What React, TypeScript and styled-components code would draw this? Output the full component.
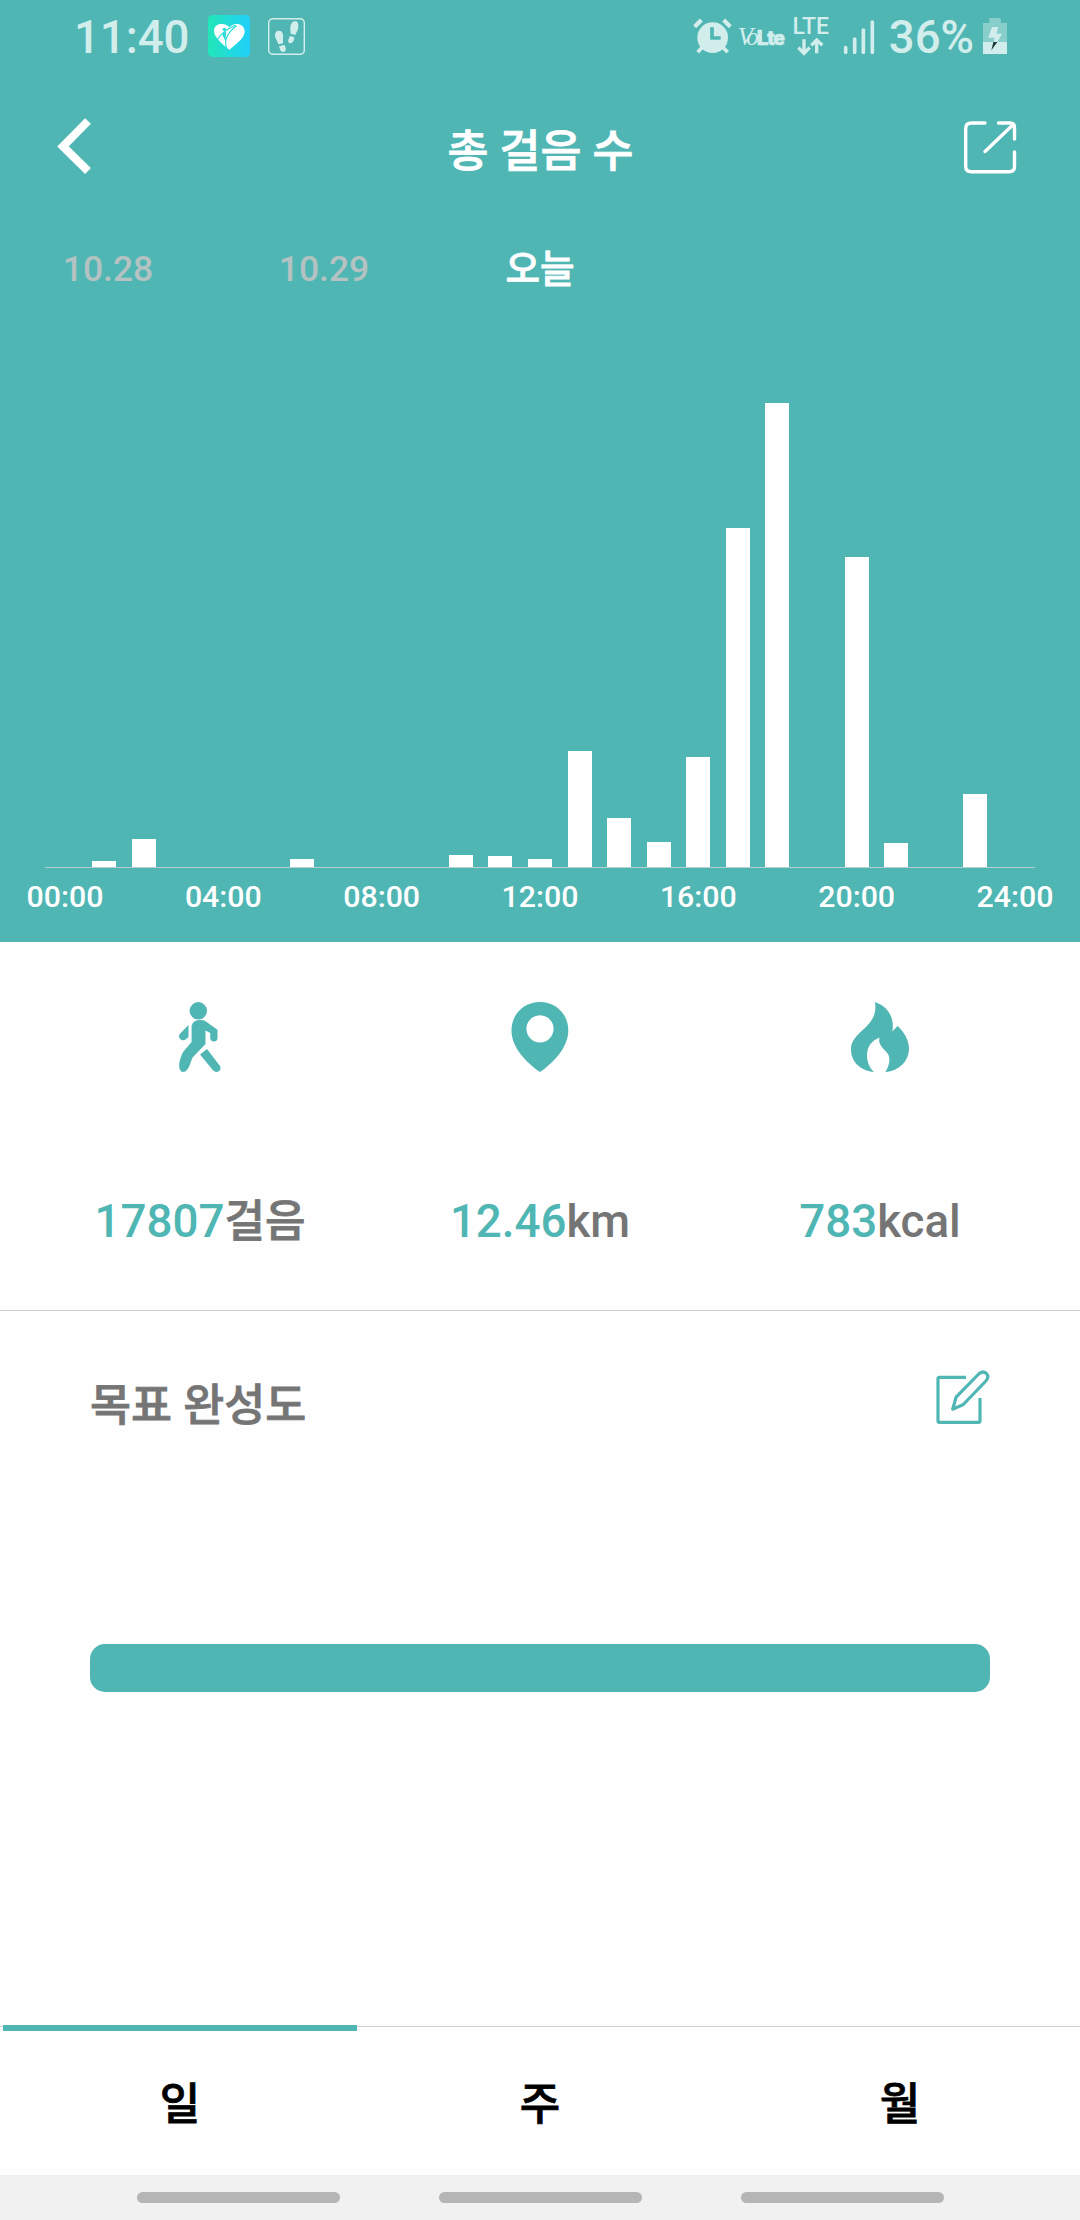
import React from "react";
import styled, { createGlobalStyle, css } from "styled-components";

const TEAL = "#50b6b4";
const STATUS = "#d2eeec";

const GlobalStyle = createGlobalStyle`
  * { box-sizing: border-box; }
  body {
    margin: 0;
    background: #fff;
    font-family: Roboto, "Noto Sans CJK KR", sans-serif;
    font-weight: 500;
  }
`;

/* Semi-bold Hangul: the medium weight with a slightly thickened outline. */
const hangulSemiBold = css`
  font-weight: 500;
  -webkit-text-stroke: 0.8px currentColor;
`;

const Screen = styled.div`
  width: 1080px;
  height: 2220px;
  display: flex;
  flex-direction: column;
  background: #fefefe;
  overflow: hidden;
`;

const Hero = styled.section`
  height: 942px;
  flex: none;
  display: flex;
  flex-direction: column;
  background: ${TEAL};
  color: #fff;
`;

const StatusBar = styled.div`
  height: 72px;
  flex: none;
  display: flex;
  align-items: flex-start;
  justify-content: space-between;
  padding: 15px 73px 0 74px;
  color: ${STATUS};
`;

const StatusGroup = styled.div`
  display: flex;
  align-items: flex-start;
`;

const StatusText = styled.span<{ $ml?: number }>`
  margin-top: 1px;
  font-size: 45.5px;
  line-height: 44px;
  margin-left: ${(p) => p.$ml ?? 0}px;
`;

const StatusIcon = styled.svg<{ $ml: number; $mt: number }>`
  display: block;
  flex: none;
  margin-left: ${(p) => p.$ml}px;
  margin-top: ${(p) => p.$mt}px;
`;

const Volte = styled.div`
  display: flex;
  align-items: baseline;
  width: 48px;
  margin: 7px 0 0 6px;
  line-height: 30px;
`;

const VoMark = styled.span`
  width: 19px;
  font: italic 400 25px/30px "Liberation Serif", serif;
  letter-spacing: -4px;
`;

const LteMark = styled.span`
  font: 900 21px/30px Roboto, sans-serif;
  letter-spacing: -1px;
  -webkit-text-stroke: 0.6px currentColor;
`;

const Network = styled.div`
  width: 36px;
  margin-left: 7px;
  display: flex;
  flex-direction: column;
  align-items: center;
`;

const NetworkLabel = styled.span`
  font-size: 23px;
  line-height: 23px;
`;

const AppBar = styled.header`
  height: 144px;
  flex: none;
  display: grid;
  grid-template-columns: 60px 1fr 60px;
  align-items: start;
  padding: 0 62px 0 55px;
`;

const Title = styled.h1`
  margin: 47px 0 0 8px;
  font-size: 44.5px;
  line-height: 66px;
  ${hangulSemiBold}
  text-align: center;
`;

const BarIcon = styled.svg<{ $mt: number; $end?: boolean }>`
  display: block;
  margin-top: ${(p) => p.$mt}px;
  justify-self: ${(p) => (p.$end ? "end" : "start")};
`;

const Dates = styled.nav`
  height: 104px;
  flex: none;
  display: grid;
  grid-template-columns: repeat(5, 216px);
  text-align: center;
`;

const DateTab = styled.span<{ $active?: boolean }>`
  padding-top: 1px;
  font-size: 35.5px;
  line-height: 104px;
  color: #b4c3c1;
  ${(p) =>
    p.$active &&
    css`
      font-size: 37.5px;
      color: #fff;
      ${hangulSemiBold}
    `}
`;

const Bars = styled.div`
  height: 548px;
  margin: 0 45px;
  flex: none;
  display: grid;
  grid-template-columns: repeat(25, 39.6px);
  align-items: end;
  justify-items: center;
  border-bottom: 1px solid #b4cfcd;
`;

const Bar = styled.div`
  width: 24px;
  background: #fff;
`;

const AxisLabels = styled.div`
  display: flex;
  justify-content: space-between;
  padding: 10px 15px 0 15px;
`;

const AxisLabel = styled.span`
  width: 100px;
  text-align: center;
  font-size: 30.3px;
  line-height: 38px;
`;

const Stats = styled.section`
  height: 369px;
  flex: none;
  display: grid;
  grid-template-columns: repeat(3, 340px);
  justify-content: center;
  border-bottom: 1px solid #d0d0d0;
`;

const Stat = styled.div`
  display: flex;
  flex-direction: column;
  align-items: center;
  padding-top: 60px;
`;

const StatValue = styled.div`
  display: flex;
  align-items: baseline;
  margin-top: 117px;
  font-size: 45.7px;
  line-height: 66px;
  color: #757575;
  white-space: nowrap;
`;

const StatNumber = styled.span`
  color: ${TEAL};
`;

const StatUnit = styled.span<{ $hangul?: boolean }>`
  ${(p) =>
    p.$hangul &&
    css`
      font-size: 44px;
      ${hangulSemiBold}
    `}
`;

const Goal = styled.section`
  flex: 1;
  padding: 59px 90px 0;
`;

const GoalHeader = styled.div`
  display: flex;
  justify-content: space-between;
  align-items: flex-start;
  height: 274px;
`;

const GoalTitle = styled.h2`
  margin: 0;
  padding-top: 3px;
  font-size: 44.6px;
  line-height: 66px;
  ${hangulSemiBold}
  color: #757575;
`;

const ProgressTrack = styled.div`
  height: 48px;
  border-radius: 15px;
  overflow: hidden;
  background: #e6e6e6;
`;

const ProgressFill = styled.div`
  height: 100%;
  background: ${TEAL};
`;

const Tabs = styled.nav`
  height: 150px;
  flex: none;
  display: grid;
  grid-template-columns: repeat(3, 1fr);
`;

const Tab = styled.button`
  display: flex;
  flex-direction: column;
  align-items: stretch;
  padding: 0 3px;
  border: 0;
  background: linear-gradient(#d0d0d0, #d0d0d0) 0 1px / 100% 1px no-repeat;
  color: #000;
  font: inherit;
  font-size: 44px;
  ${hangulSemiBold}
  line-height: 66px;
`;

const TabMarker = styled.span<{ $active?: boolean }>`
  height: 6px;
  margin-bottom: 41px;
  background: ${(p) => (p.$active ? TEAL : "transparent")};
`;

const SystemNav = styled.div`
  height: 45px;
  flex: none;
  display: flex;
  justify-content: center;
  gap: 99px;
  padding-top: 17px;
  background: #f1f1f1;
`;

const NavPill = styled.span`
  width: 203px;
  height: 11px;
  border-radius: 6px;
  background: #b5b5b5;
`;

const hourly = [
  0, 6, 28, 0, 0, 0, 8, 0, 0, 0, 12.5, 11, 8, 116, 49, 25, 110, 339, 464, 0,
  310, 24, 0, 73, 0,
];
const hours = ["00:00", "04:00", "08:00", "12:00", "16:00", "20:00", "24:00"];
const progress = 100;

const HeartAppIcon = () => (
  <StatusIcon $ml={19} $mt={0} width="42" height="42" viewBox="0 0 126 126">
    <defs>
      <linearGradient id="appGradient" x1="0" x2="1" y1="0" y2="0">
        <stop offset="0" stopColor="#22e6b8" />
        <stop offset="1" stopColor="#1fd0fb" />
      </linearGradient>
    </defs>
    <rect width="126" height="126" rx="14" fill="url(#appGradient)" />
    <path d="M64 104C48 92 18 68 18 48C18 32 30 27 42 27C52 27 60 31 64 37C69 31 76 27 86 27C98 27 110 34 110 50C110 70 80 90 64 104Z" fill="#fff" />
    <path d="M28 74C40 56 56 42 82 31M56 98C46 78 60 50 86 32" fill="none" stroke="#25dcd9" strokeWidth="3.5" />
    <circle cx="49" cy="43" r="5" fill="#25dcd9" />
    <path d="M44 54L54 50L53 80Q48 68 44 62Z" fill="#25dcd9" />
  </StatusIcon>
);

const FootstepsIcon = () => (
  <StatusIcon $ml={18} $mt={3} width="37" height="37" viewBox="0 0 111 111">
    <rect x="2" y="2" width="107" height="107" rx="13" fill="none" stroke={STATUS} strokeWidth="4.5" />
    <g fill={STATUS}>
      <path d="M33 38C43 38 47 49 45 58C44 65 46 71 45 76L31 79C29 70 21 62 21 52C21 44 25 38 33 38Z" />
      <path d="M33 85L49 81C53 88 55 94 52 99C48 104 40 102 37 97Z" />
      <path d="M80 10C89 8 92 17 91 27C90 38 84 44 82 51L68 47C68 41 66 36 67 28C68 18 72 11 80 10Z" />
      <path d="M66 54L79 58C79 65 77 72 70 75C63 77 59 71 61 65Z" />
    </g>
  </StatusIcon>
);

const AlarmIcon = () => (
  <StatusIcon $ml={0} $mt={3} width="39" height="36" viewBox="0 0 117 108">
    <circle cx="59" cy="59" r="46" fill={STATUS} />
    <g stroke={STATUS} strokeWidth="13">
      <path d="M5 26L25 6M92 6L112 26" />
      <path d="M28 88L14 103M90 88L104 103" strokeWidth="11" />
    </g>
    <path d="M57 28V60H83" fill="none" stroke={TEAL} strokeWidth="11" />
  </StatusIcon>
);

const DataArrows = () => (
  <svg width="27" height="18" viewBox="0 0 81 54" fill="none" stroke={STATUS} strokeWidth="10">
    <path d="M21 4V45M4 29L21 46L38 29M59 46V6M43 22L59 6L76 22" />
  </svg>
);

const SignalIcon = () => (
  <StatusIcon $ml={14} $mt={5} width="32" height="34" viewBox="0 0 96 102">
    <g stroke={STATUS} strokeWidth="11" strokeLinecap="round">
      <path d="M8 83V97M35 57V97M61 30V97M88 6V97" />
    </g>
  </StatusIcon>
);

const BatteryIcon = () => (
  <StatusIcon $ml={9} $mt={3} width="24" height="36" viewBox="0 0 72 108">
    <path d="M19 0H53V15H72V72H0V15H19Z" fill="#88cfcc" />
    <rect y="72" width="72" height="36" fill={STATUS} />
    <path d="M27 27H46L40 47H57L43 72H32L35 59H16Z" fill={STATUS} />
    <path d="M31 72H43L25 97Z" fill="#20373a" />
  </StatusIcon>
);

const BackIcon = () => (
  <BarIcon $mt={46} width="40" height="56" viewBox="0 0 40 56">
    <path d="M33 3L8 28.5L33 53" fill="none" stroke="#fff" strokeWidth="8.2" />
  </BarIcon>
);

const ShareIcon = () => (
  <BarIcon $mt={48} $end width="56" height="56" viewBox="-1 -1 56 56">
    <path
      d="M22 3H8.5Q2.7 3 2.7 8.5V46.5Q2.7 51.7 8.5 51.7H46Q51.5 51.7 51.5 46.5V32M35.5 3H47Q51.5 3 51.5 7.5V19M50.5 4.3L22 31.5"
      transform="translate(0 -1)"
      fill="none"
      stroke="#fff"
      strokeWidth="3.4"
      strokeLinecap="round"
      strokeLinejoin="round"
    />
  </BarIcon>
);

const WalkIcon = () => (
  <svg width="42" height="70" viewBox="0 0 42 70" fill={TEAL}>
    <circle cx="19.3" cy="8.8" r="8.7" />
    <path d="M15.5 19.2Q20 17.3 25.5 18.5L38.5 27.8V36.5Q38 39.5 35.2 39.5Q31.5 39.5 31.2 36V31L26.5 28.4V42L14.5 54.5C11.5 57 11 69.8 4 70Q0 69.5 .2 63C.5 58.5 2.5 52.5 4.5 49.5L12.6 40V24Q13 21 15.5 19.2Z" />
    <path d="M9.5 23V35L6.5 37.5C3.5 39.3 0 37.3 0 34.5C0 33 .5 32.3 1.5 31.3Z" />
    <path d="M28 47L41 64Q42.3 67 40.2 69Q37 71.3 34 68.2L21 52.5Z" />
  </svg>
);

const PinIcon = () => (
  <svg width="58" height="70" viewBox="0 0 58 70">
    <path
      fillRule="evenodd"
      fill={TEAL}
      d="M29 0C45 0 57.3 12 57.3 28.5C57.3 45 43 60.5 29 70C15 60.5 .5 45 .5 28.5C.5 12 13 0 29 0ZM29 13.2A13.6 13.6 0 1 0 29 40.4A13.6 13.6 0 1 0 29 13.2Z"
    />
  </svg>
);

const FlameIcon = () => (
  <svg width="58" height="70" viewBox="0 0 58 70">
    <path
      fill={TEAL}
      d="M24 0C36 4 44 15 41.3 29.5L46.6 24C53 30 58 38 58 46.5C58 59 48 69 34.5 70C39 62 40 55 35.5 50C31 45 27 42 28.5 35.5C20 39 16.3 45 16 53C15.8 59 18.5 66 23 70C9 68.5 0 59.5 0 47.5C0 28.5 28 26 24 0Z"
    />
  </svg>
);

const EditIcon = () => (
  <svg width="54" height="54" viewBox="0 0 54 54" fill="none" stroke={TEAL} strokeWidth="3.2" strokeLinejoin="round">
    <path d="M30 7.3H3.5Q2 7.3 2 8.8V51Q2 52.4 3.5 52.4H42.5Q44 52.4 44 51V28" />
    <path d="M16.7 39.2L20.1 27.2L42.7 4Q46.7 .2 50.4 3.5Q53.6 7 49.9 11L27.3 34.5Z" />
  </svg>
);

const stats = [
  { icon: <WalkIcon />, value: "17807", unit: "걸음", hangul: true },
  { icon: <PinIcon />, value: "12.46", unit: "km" },
  { icon: <FlameIcon />, value: "783", unit: "kcal" },
];

export default function App() {
  return (
    <Screen>
      <GlobalStyle />
      <Hero>
        <StatusBar>
          <StatusGroup>
            <StatusText>11:40</StatusText>
            <HeartAppIcon />
            <FootstepsIcon />
          </StatusGroup>
          <StatusGroup>
            <AlarmIcon />
            <Volte>
              <VoMark>Vo</VoMark>
              <LteMark>Lte</LteMark>
            </Volte>
            <Network>
              <NetworkLabel>LTE</NetworkLabel>
              <DataArrows />
            </Network>
            <SignalIcon />
            <StatusText $ml={14}>36%</StatusText>
            <BatteryIcon />
          </StatusGroup>
        </StatusBar>
        <AppBar>
          <BackIcon />
          <Title>총 걸음 수</Title>
          <ShareIcon />
        </AppBar>
        <Dates>
          <DateTab>10.28</DateTab>
          <DateTab>10.29</DateTab>
          <DateTab $active>오늘</DateTab>
        </Dates>
        <Bars>
          {hourly.map((h, i) => (
            <Bar key={i} style={{ height: h }} />
          ))}
        </Bars>
        <AxisLabels>
          {hours.map((h) => (
            <AxisLabel key={h}>{h}</AxisLabel>
          ))}
        </AxisLabels>
      </Hero>
      <Stats>
        {stats.map((s) => (
          <Stat key={s.unit}>
            {s.icon}
            <StatValue>
              <StatNumber>{s.value}</StatNumber>
              <StatUnit $hangul={s.hangul}>{s.unit}</StatUnit>
            </StatValue>
          </Stat>
        ))}
      </Stats>
      <Goal>
        <GoalHeader>
          <GoalTitle>목표 완성도</GoalTitle>
          <EditIcon />
        </GoalHeader>
        <ProgressTrack>
          <ProgressFill style={{ width: `${progress}%` }} />
        </ProgressTrack>
      </Goal>
      <Tabs>
        {["일", "주", "월"].map((t, i) => (
          <Tab key={t}>
            <TabMarker $active={i === 0} />
            {t}
          </Tab>
        ))}
      </Tabs>
      <SystemNav>
        <NavPill />
        <NavPill />
        <NavPill />
      </SystemNav>
    </Screen>
  );
}
